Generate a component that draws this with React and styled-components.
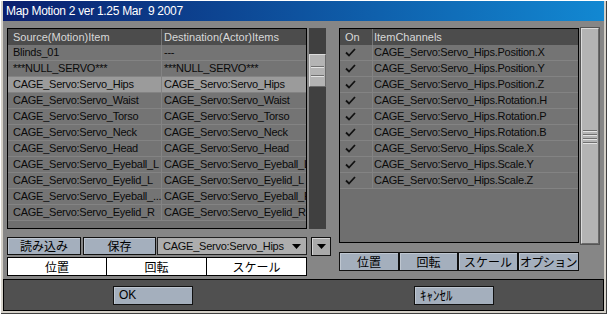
import React from "react";
import styled, { createGlobalStyle } from "styled-components";

const jp = `"Noto Sans CJK JP", "Liberation Sans", sans-serif`;

const GlobalStyle = createGlobalStyle`
  html, body {
    margin: 0;
    padding: 0;
    background: #d4d0c8;
  }
  body {
    font-family: "Liberation Sans", Arial, sans-serif;
  }
`;

const Window = styled.div`
  width: 607px;
  height: 314px;
  box-sizing: border-box;
  padding: 1px 3px 3px 3px;
  background: #d4d0c8;
  box-shadow: inset 1px 1px 0 #ffffff, inset -1px -1px 0 #404040;
  display: flex;
  flex-direction: column;
`;

const TitleBar = styled.div`
  flex: none;
  height: 20px;
  padding-left: 3px;
  background: linear-gradient(90deg, #0a1f6e 0%, #1288d2 100%);
  color: #ffffff;
  font-size: 12px;
  letter-spacing: -0.3px;
  line-height: 20px;
  white-space: pre;
`;

const Body = styled.div`
  flex: 1;
  display: flex;
  flex-direction: column;
  background: #868686;
`;

const Workspace = styled.div`
  flex: 1;
  display: flex;
  padding: 7px 0 0 4px;
`;

const LeftPane = styled.div`
  width: 324px;
  display: flex;
  flex-direction: column;
`;

const RightPane = styled.div`
  margin-left: 8px;
  display: flex;
  flex-direction: column;
`;

const ListArea = styled.div`
  display: flex;
  gap: 2px;
  align-items: flex-start;
`;

const List = styled.div`
  width: ${p => p.$width}px;
  height: ${p => p.$height}px;
  box-sizing: border-box;
  border: 1px solid #000;
  background: #6f6f6f;
  overflow: hidden;
`;

const HeaderRow = styled.div`
  display: grid;
  grid-template-columns: ${p => p.$cols};
  height: 16px;
  background: #4c4c4c;
  color: #d8d8d8;
  font-size: 11px;
  line-height: 16px;
`;

const Row = styled.div`
  display: grid;
  grid-template-columns: ${p => p.$cols};
  height: 16px;
  box-sizing: border-box;
  border-bottom: 1px solid #838383;
  background: ${p => (p.$selected ? "#9b9b9b" : "#747474")};
  color: #0a0a0a;
  font-size: 11px;
  letter-spacing: -0.25px;
  line-height: 15px;
`;

const Cell = styled.div`
  padding-left: ${p => p.$pad}px;
  white-space: nowrap;
  overflow: hidden;
  ${p => p.$divider && `border-right: 1px solid ${p.$dividerColor || "#838383"};`}
`;

const ScrollTrack = styled.div`
  width: ${p => p.$width}px;
  height: ${p => p.$height}px;
  box-sizing: border-box;
  background: #404040;
  display: flex;
  flex-direction: column;
`;

const Thumb = styled.div`
  margin-top: ${p => p.$top}px;
  height: ${p => p.$height}px;
  box-sizing: border-box;
  background: #b4b4b4;
  border: 1px solid;
  border-color: #dcdcdc #6a6a6a #6a6a6a #dcdcdc;
  box-shadow: ${p => (p.$outline ? "0 0 0 1px #555" : "none")};
  display: flex;
  flex-direction: column;
  justify-content: center;
  align-items: center;
  gap: ${p => p.$gripGap}px;
`;

const Grip = styled.div`
  width: ${p => p.$width || 11}px;
  height: 1px;
  background: #707070;
  box-shadow: 0 1px 0 #e4e4e4;
`;

const ControlRow = styled.div`
  display: flex;
  align-items: flex-start;
  margin-top: 8px;
`;

const Button = styled.button`
  width: ${p => p.$width}px;
  height: ${p => p.$height || 18}px;
  margin: 0 0 0 ${p => p.$ml || 0}px;
  padding: 0 0 0 ${p => (p.$left ? 5 : 0)}px;
  box-sizing: border-box;
  border: 1px solid #111;
  background: #a4afbd;
  box-shadow: inset 1px 1px 0 rgba(255, 255, 255, 0.3);
  color: #000;
  font-family: ${p => (p.$latin ? `"Liberation Sans", sans-serif` : jp)};
  font-size: ${p => p.$size || 12}px;
  line-height: 16px;
  letter-spacing: ${p => (p.$tight ? "-0.6px" : "0")};
  white-space: nowrap;
  overflow: hidden;
  text-align: ${p => (p.$left ? "left" : "center")};
  cursor: default;
`;

const Combo = styled.div`
  width: 150px;
  height: 18px;
  margin-left: 1px;
  box-sizing: border-box;
  border: 1px solid #222;
  background: #adadad;
  display: flex;
  align-items: center;
  justify-content: space-between;
  padding: 0 5px;
  font-size: 11px;
  letter-spacing: -0.25px;
  color: #0a0a0a;
`;

const DropButton = styled.div`
  width: 20px;
  height: 19px;
  margin-left: 4px;
  box-sizing: border-box;
  border: 1px solid #111;
  background: #a9a9a9;
  box-shadow: inset 1px 1px 0 #d4d4d4;
  display: flex;
  align-items: center;
  justify-content: center;
`;

const TabRow = styled.div`
  display: flex;
  margin-top: 1px;
`;

const Tab = styled.div`
  width: ${p => p.$width}px;
  height: 19px;
  box-sizing: border-box;
  margin-left: ${p => (p.$first ? 0 : -1)}px;
  border: 1px solid #000;
  background: #ffffff;
  font-family: ${jp};
  font-size: 12px;
  line-height: 17px;
  text-align: center;
  color: #000;
`;

const Footer = styled.div`
  flex: none;
  height: 32px;
  box-sizing: border-box;
  border: 1px solid #000;
  background: #505050;
  display: flex;
  align-items: center;
  padding-left: 109px;
`;

const Arrow = () => (
  <svg width="9" height="5" viewBox="0 0 9 5">
    <path d="M0 0H9L4.5 5Z" fill="#000" />
  </svg>
);

const Check = () => (
  <svg width="11" height="9" viewBox="0 0 11 9" style={{ marginTop: 3 }}>
    <path d="M1 4.5L4 7.5L10 1" fill="none" stroke="#111" strokeWidth="1.8" />
  </svg>
);

const mapping = [
  ["Blinds_01", "---"],
  ["***NULL_SERVO***", "***NULL_SERVO***"],
  ["CAGE_Servo:Servo_Hips", "CAGE_Servo:Servo_Hips", true],
  ["CAGE_Servo:Servo_Waist", "CAGE_Servo:Servo_Waist"],
  ["CAGE_Servo:Servo_Torso", "CAGE_Servo:Servo_Torso"],
  ["CAGE_Servo:Servo_Neck", "CAGE_Servo:Servo_Neck"],
  ["CAGE_Servo:Servo_Head", "CAGE_Servo:Servo_Head"],
  ["CAGE_Servo:Servo_Eyeball_L", "CAGE_Servo:Servo_Eyeball_L"],
  ["CAGE_Servo:Servo_Eyelid_L", "CAGE_Servo:Servo_Eyelid_L"],
  ["CAGE_Servo:Servo_Eyeball_...", "CAGE_Servo:Servo_Eyeball_R"],
  ["CAGE_Servo:Servo_Eyelid_R", "CAGE_Servo:Servo_Eyelid_R"]
];

const channels = [
  "Position.X",
  "Position.Y",
  "Position.Z",
  "Rotation.H",
  "Rotation.P",
  "Rotation.B",
  "Scale.X",
  "Scale.Y",
  "Scale.Z"
];

const leftCols = "154px 1fr";
const rightCols = "33px 1fr";

export default function App() {
  return (
    <>
      <GlobalStyle />
      <Window>
        <TitleBar>Map Motion 2 ver 1.25 Mar  9 2007</TitleBar>
        <Body>
          <Workspace>
            <LeftPane>
              <ListArea>
                <List $width={300} $height={201}>
                  <HeaderRow $cols={leftCols}>
                    <Cell $pad={5} $divider $dividerColor="#777">
                      Source(Motion)Item
                    </Cell>
                    <Cell $pad={2}>Destination(Actor)Items</Cell>
                  </HeaderRow>
                  {mapping.map(([src, dst, sel]) => (
                    <Row key={src} $cols={leftCols} $selected={sel}>
                      <Cell $pad={5} $divider>
                        {src}
                      </Cell>
                      <Cell $pad={2}>{dst}</Cell>
                    </Row>
                  ))}
                </List>
                <ScrollTrack $width={17} $height={201}>
                  <Thumb $top={26} $height={33} $gripGap={8}>
                    <Grip $width={13} />
                    <Grip $width={13} />
                  </Thumb>
                </ScrollTrack>
              </ListArea>
              <ControlRow>
                <Button $width={74}>読み込み</Button>
                <Button $width={73} $ml={2}>
                  保存
                </Button>
                <Combo>
                  <span>CAGE_Servo:Servo_Hips</span>
                  <Arrow />
                </Combo>
                <DropButton>
                  <Arrow />
                </DropButton>
              </ControlRow>
              <TabRow>
                <Tab $width={100} $first>
                  位置
                </Tab>
                <Tab $width={101}>回転</Tab>
                <Tab $width={101}>スケール</Tab>
              </TabRow>
            </LeftPane>
            <RightPane>
              <ListArea>
                <List $width={240} $height={215}>
                  <HeaderRow $cols={rightCols}>
                    <Cell $pad={5} $divider $dividerColor="#777">
                      On
                    </Cell>
                    <Cell $pad={1}>ItemChannels</Cell>
                  </HeaderRow>
                  {channels.map(ch => (
                    <Row key={ch} $cols={rightCols}>
                      <Cell $pad={5} $divider>
                        <Check />
                      </Cell>
                      <Cell $pad={1}>CAGE_Servo:Servo_Hips.{ch}</Cell>
                    </Row>
                  ))}
                </List>
                <ScrollTrack $width={18} $height={216}>
                  <Thumb $top={0} $height={216} $gripGap={3} $outline>
                    <Grip $width={14} />
                    <Grip $width={14} />
                    <Grip $width={14} />
                    <Grip $width={14} />
                  </Thumb>
                </ScrollTrack>
              </ListArea>
              <ControlRow>
                <Button $width={60} $height={19}>
                  位置
                </Button>
                <Button $width={59} $height={19}>
                  回転
                </Button>
                <Button $width={60} $height={19}>
                  スケール
                </Button>
                <Button $width={61} $height={19} $tight>
                  オプション
                </Button>
              </ControlRow>
            </RightPane>
          </Workspace>
          <Footer>
            <Button $width={80} $height={19} $left $latin>
              OK
            </Button>
            <Button $width={80} $height={19} $left $ml={221} $size={13}>
              ｷｬﾝｾﾙ
            </Button>
          </Footer>
        </Body>
      </Window>
    </>
  );
}
